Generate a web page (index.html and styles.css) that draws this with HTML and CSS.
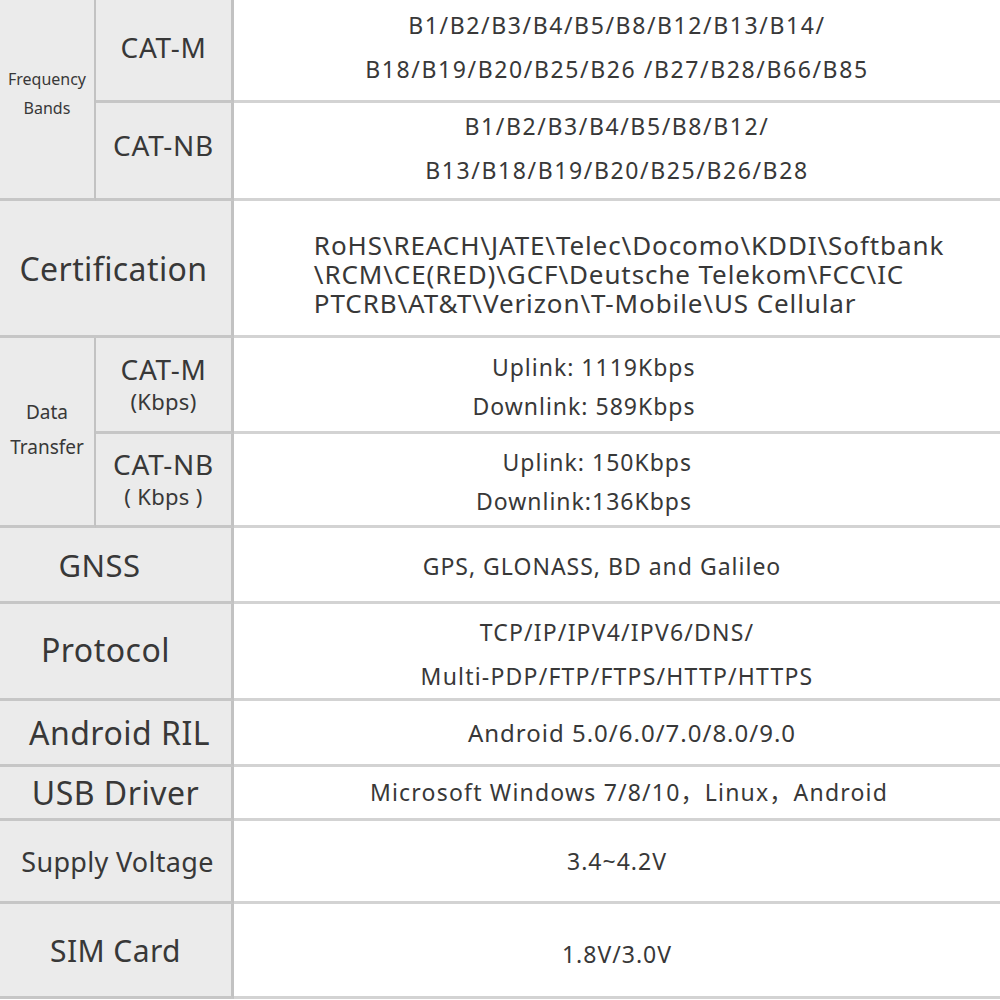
FILE: index.html
```html
<!DOCTYPE html>
<html lang="en">
<head>
    <meta charset="UTF-8" />
    <meta name="viewport" content="width=device-width, initial-scale=1.0" />
    <link rel="stylesheet" href="styles.css">
    <title>Module Specifications</title>
</head>
<body>
    <div class="spec">
        <div class="cell label group freq rows-2">Frequency<br>Bands</div>
        <div class="cell label sub up">CAT-M</div>
        <div class="cell value bands">B1/B2/B3/B4/B5/B8/B12/B13/B14/<br>B18/B19/B20/B25/B26 /B27/B28/B66/B85</div>
        <div class="cell label sub nb">CAT-NB</div>
        <div class="cell value bands">B1/B2/B3/B4/B5/B8/B12/<br>B13/B18/B19/B20/B25/B26/B28</div>

        <div class="cell label wide cert">Certification</div>
        <div class="cell value cert-list">RoHS\REACH\JATE\Telec\Docomo\KDDI\Softbank<br>\RCM\CE(RED)\GCF\Deutsche Telekom\FCC\IC<br>PTCRB\AT&amp;T\Verizon\T-Mobile\US Cellular</div>

        <div class="cell label group data rows-2">Data<br>Transfer</div>
        <div class="cell label sub">CAT-M<br><span class="unit">(Kbps)</span></div>
        <div class="cell value rate">Uplink: 1119Kbps<br>Downlink: 589Kbps</div>
        <div class="cell label sub">CAT-NB<br><span class="unit">( Kbps )</span></div>
        <div class="cell value rate">Uplink: 150Kbps<br>Downlink:136Kbps</div>

        <div class="cell label wide gnss">GNSS</div>
        <div class="cell value gps">GPS, GLONASS, BD and Galileo</div>

        <div class="cell label wide big proto-label">Protocol</div>
        <div class="cell value proto">TCP/IP/IPV4/IPV6/DNS/<br>Multi-PDP/FTP/FTPS/HTTP/HTTPS</div>

        <div class="cell label wide big ril">Android RIL</div>
        <div class="cell value android">Android 5.0/6.0/7.0/8.0/9.0</div>

        <div class="cell label wide big">USB Driver</div>
        <div class="cell value usb">Microsoft Windows 7/8/10，Linux，Android</div>

        <div class="cell label wide mid">Supply Voltage</div>
        <div class="cell value">3.4~4.2V</div>

        <div class="cell label wide sim">SIM Card</div>
        <div class="cell value sim-value">1.8V/3.0V</div>
    </div>
</body>
</html>
```

FILE: styles.css
```css
* {
    box-sizing: border-box;
    margin: 0;
    padding: 0;
}
body {
    background-color: #fff;
    font-family: "Noto Sans", "Noto Sans CJK SC", sans-serif;
    color: #383838;
}
.spec {
    display: grid;
    grid-template-columns: 96px 138px 1fr;
    grid-template-rows: 103px 98px 137px 96px 94px 76px 97px 66px 54px 83px 95px;
    width: 1000px;
}
.cell {
    display: flex;
    align-items: center;
    justify-content: center;
    text-align: center;
    border-bottom: 3px solid #d3d3d3;
}
.label {
    background-color: #ebebeb;
    border-right: 3px solid #c2c2c2;
    border-bottom-color: #c6c6c6;
}
.rows-2 {
    grid-row: span 2;
}
.wide {
    grid-column: span 2;
}
.group {
    border-right-width: 2px;
}
.freq {
    font-size: 16px;
    line-height: 29px;
    padding-bottom: 10px;
}
.data {
    font-size: 19px;
    line-height: 35px;
    padding-bottom: 4px;
}
.sub {
    font-size: 28px;
    line-height: 33px;
    letter-spacing: 0.7px;
    flex-direction: column;
}
.sub.up {
    padding-bottom: 6px;
}
.sub.nb {
    padding-bottom: 10px;
}
.sub .unit {
    font-size: 22px;
    line-height: 30px;
    letter-spacing: 0.3px;
}
.cert {
    font-size: 32px;
    letter-spacing: 0.4px;
    padding-right: 4px;
}
.gnss {
    font-size: 31px;
    letter-spacing: 0.5px;
    padding-right: 32px;
}
.big {
    font-size: 32px;
    letter-spacing: 0.5px;
}
.proto-label {
    padding-right: 20px;
    padding-bottom: 4px;
}
.ril {
    padding-left: 8px;
}
.mid {
    font-size: 27px;
    letter-spacing: 0.3px;
    padding-left: 4px;
}
.sim {
    font-size: 30px;
    letter-spacing: 0.4px;
}
.value {
    font-size: 23px;
    line-height: 39px;
    letter-spacing: 1px;
}
.bands {
    line-height: 44px;
    letter-spacing: 1.6px;
    padding-bottom: 6px;
}
.cert-list {
    font-size: 26px;
    line-height: 29px;
    letter-spacing: 0.9px;
    text-align: left;
    padding-left: 24px;
    padding-top: 12px;
}
.proto {
    line-height: 44px;
    letter-spacing: 1.2px;
    padding-top: 6px;
}
.rate {
    text-align: right;
    padding-right: 66px;
    padding-top: 4px;
}
.gps {
    padding-right: 30px;
    padding-top: 4px;
}
.android {
    font-size: 24px;
    padding-left: 30px;
}
.usb {
    letter-spacing: 1.2px;
    padding-left: 24px;
}
.sim-value {
    padding-top: 8px;
}
```
